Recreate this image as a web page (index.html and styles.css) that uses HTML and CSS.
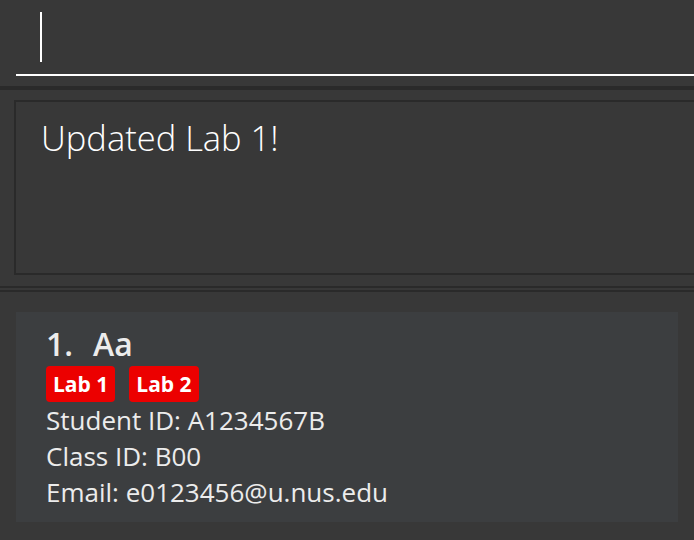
FILE: index.html
```html
<!DOCTYPE html>
<html>
<head>
<meta charset="utf-8">
<link rel="stylesheet" href="styles.css">
</head>
<body>
<div class="app">
  <div class="command">
    <div class="command-field"><span class="caret"></span></div>
  </div>
  <div class="divider"></div>
  <div class="result-pane">
    <div class="result-box">Updated Lab 1!</div>
  </div>
  <div class="split">
    <div class="split-line"></div>
    <div class="split-gap"></div>
    <div class="split-line"></div>
  </div>
  <div class="list">
    <div class="card">
      <div class="card-title"><span class="card-id">1.</span><span class="card-name">Aa</span></div>
      <div class="tags"><span class="tag">Lab 1</span><span class="tag">Lab 2</span></div>
      <div class="card-line">Student ID: A1234567B</div>
      <div class="card-line">Class ID: B00</div>
      <div class="card-line">Email: e0123456@u.nus.edu</div>
    </div>
  </div>
</div>
</body>
</html>
```

FILE: styles.css
```css
html, body {
  margin: 0;
  padding: 0;
}
body {
  background: #383838;
  width: 694px;
  height: 540px;
  overflow: hidden;
  font-family: "Open Sans", "Noto Sans", sans-serif;
}
.app {
  display: flex;
  flex-direction: column;
}
.command {
  height: 86px;
  padding-left: 16px;
  box-sizing: border-box;
}
.command-field {
  height: 74px;
  border-bottom: 2px solid #ffffff;
  display: flex;
  align-items: flex-start;
}
.caret {
  display: block;
  width: 2px;
  height: 50px;
  margin: 12px 0 0 24px;
  background: #ffffff;
}
.divider {
  height: 4px;
  background: #2a2a2a;
}
.result-pane {
  padding: 10px 0 0 14px;
}
.result-box {
  height: 175px;
  box-sizing: border-box;
  border: 2px solid #2a2a2a;
  border-right: none;
  padding: 12px 25px;
  color: #ffffff;
  font-size: 34.5px;
  font-weight: 300;
  line-height: normal;
}
.split {
  margin-top: 11px;
  display: flex;
  flex-direction: column;
}
.split-line {
  height: 2px;
  background: #2a2a2a;
}
.split-gap {
  height: 2px;
  background: #383838;
}
.list {
  padding: 20px 0 0 16px;
}
.card {
  width: 662px;
  height: 210px;
  box-sizing: border-box;
  background: #3c3e40;
  padding: 10px 30px;
  color: #ececec;
}
.card-title {
  display: flex;
  gap: 20px;
  font-size: 32px;
  font-weight: 600;
  line-height: normal;
}
.tags {
  display: flex;
  gap: 14px;
  margin-top: 1px;
}
.tag {
  background: #ec0000;
  color: #ffffff;
  font-size: 21px;
  font-weight: 700;
  line-height: 30px;
  padding: 3px 7px;
  border-radius: 4px;
}
.card-line {
  font-size: 26px;
  line-height: normal;
}
```
